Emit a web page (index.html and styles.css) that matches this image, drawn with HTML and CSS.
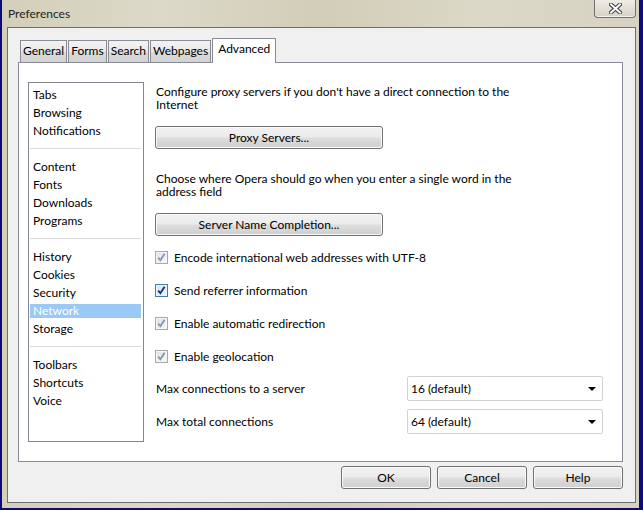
FILE: index.html
```html
<!DOCTYPE html>
<html lang="en">

<head>
    <meta charset="UTF-8" />
    <title>Preferences</title>
    <link rel="stylesheet" href="styles.css">
</head>

<body>
    <div class="window">
        <div class="titlebar">
            <span class="title">Preferences</span>
            <div class="close">
                <svg width="13" height="11" viewBox="0 0 13 11">
                    <path d="M2 1.5 L11 9.5 M11 1.5 L2 9.5" stroke="#3c3c3c" stroke-width="4" stroke-linecap="square" fill="none" />
                    <path d="M2 1.5 L11 9.5 M11 1.5 L2 9.5" stroke="#ffffff" stroke-width="2" stroke-linecap="square" fill="none" />
                </svg>
            </div>
        </div>

        <div class="client">
            <div class="tabs">
                <div class="tab">General</div>
                <div class="tab">Forms</div>
                <div class="tab">Search</div>
                <div class="tab">Webpages</div>
                <div class="tab selected">Advanced</div>
            </div>

            <div class="panel">
                <ul class="categories">
                    <li>Tabs</li>
                    <li>Browsing</li>
                    <li>Notifications</li>
                    <li class="sep"></li>
                    <li>Content</li>
                    <li>Fonts</li>
                    <li>Downloads</li>
                    <li>Programs</li>
                    <li class="sep"></li>
                    <li>History</li>
                    <li>Cookies</li>
                    <li>Security</li>
                    <li class="active">Network</li>
                    <li>Storage</li>
                    <li class="sep"></li>
                    <li>Toolbars</li>
                    <li>Shortcuts</li>
                    <li>Voice</li>
                </ul>

                <div class="settings">
                    <p class="note">Configure proxy servers if you don't have a direct connection to the Internet</p>
                    <button class="btn wide">Proxy Servers...</button>

                    <p class="note second">Choose where Opera should go when you enter a single word in the address field</p>
                    <button class="btn wide">Server Name Completion...</button>

                    <div class="checks">
                        <label class="check-row">
                            <span class="box dim"><svg width="11" height="11" viewBox="0 0 11 11"><path d="M2.2 5.6 L4.4 8.2 L8.6 1.8" /></svg></span>
                            Encode international web addresses with UTF-8
                        </label>
                        <label class="check-row">
                            <span class="box focus"><svg width="11" height="11" viewBox="0 0 11 11"><path d="M2.2 5.6 L4.4 8.2 L8.6 1.8" /></svg></span>
                            Send referrer information
                        </label>
                        <label class="check-row">
                            <span class="box dim"><svg width="11" height="11" viewBox="0 0 11 11"><path d="M2.2 5.6 L4.4 8.2 L8.6 1.8" /></svg></span>
                            Enable automatic redirection
                        </label>
                        <label class="check-row">
                            <span class="box dim"><svg width="11" height="11" viewBox="0 0 11 11"><path d="M2.2 5.6 L4.4 8.2 L8.6 1.8" /></svg></span>
                            Enable geolocation
                        </label>
                    </div>

                    <div class="field">
                        <span>Max connections to a server</span>
                        <div class="select">16 (default)<span class="arrow"></span></div>
                    </div>
                    <div class="field">
                        <span>Max total connections</span>
                        <div class="select">64 (default)<span class="arrow"></span></div>
                    </div>
                </div>
            </div>

            <div class="actions">
                <button class="btn">OK</button>
                <button class="btn">Cancel</button>
                <button class="btn">Help</button>
            </div>
        </div>
    </div>
</body>

</html>
```

FILE: styles.css
```css
:root {
    --navy: #0b0b7a;
    --frame: #d7d4c3;
    --face: #f0f0f0;
    --tab-border: #898c95;
    --text: #000000;
}

/* Base */
body {
    margin: 0;
    background: var(--navy);
    font-family: "Lato", "Liberation Sans", sans-serif;
    font-size: 12px;
    color: var(--text);
}

.window {
    width: 637px;
    height: 508px;
    margin-left: 2px;
    padding: 0 3px 5px 5px;
    box-sizing: border-box;
    background: linear-gradient(90deg, #d3cfba 0%, #dcd9c9 25%, #d2cdb8 50%, #dbd8c7 75%, #d6d3c2 100%);
    display: flex;
    flex-direction: column;
}

.titlebar {
    height: 27px;
    display: flex;
    justify-content: space-between;
    align-items: center;
    flex-shrink: 0;
}

.title {
    padding-left: 1px;
    padding-bottom: 1px;
    color: #222;
}

.close {
    align-self: flex-start;
    width: 42px;
    height: 18px;
    box-sizing: border-box;
    border: 1px solid #707070;
    border-top: none;
    border-radius: 0 0 4px 4px;
    background: linear-gradient(#eeece4, #d6d3c6);
    box-shadow: inset 0 -1px 0 #f6f5f0;
    display: flex;
    align-items: center;
    justify-content: center;
}

.client {
    flex: 1;
    border: 1px solid #6e6e6e;
    background: var(--face);
    padding: 10px 12px 0 10px;
}

/* Tabs */
.tabs {
    display: flex;
    align-items: flex-end;
    padding-left: 2px;
    height: 24px;
}

.tab {
    height: 22px;
    box-sizing: border-box;
    padding: 2px 2px 0;
    margin-right: 1px;
    border: 1px solid var(--tab-border);
    border-bottom: none;
    background: linear-gradient(#f3f3f3, #e8e8e8 50%, #dadada 51%, #d3d3d3);
}

.tab.selected {
    height: 25px;
    margin-right: 0;
    margin-bottom: -1px;
    padding: 2px 5px 0;
    background: #ffffff;
    position: relative;
    z-index: 1;
}

.panel {
    height: 400px;
    box-sizing: border-box;
    border: 1px solid var(--tab-border);
    background: #ffffff;
    padding: 19px 0 0 9px;
    display: flex;
    gap: 11px;
}

/* Category list */
.categories {
    list-style: none;
    margin: 0;
    width: 116px;
    height: 360px;
    box-sizing: border-box;
    padding: 5px 2px 0 1px;
    border: 1px solid #828790;
}

.categories li {
    height: 14px;
    line-height: 13px;
    margin-bottom: 4px;
    padding-left: 3px;
}

/* sibling margins collapse, so the 10px top margin swallows the 4px above */
.categories li.sep {
    height: 1px;
    margin: 10px 0 11px;
    padding: 0;
    background: #dadada;
}

.categories li.active {
    background: #99c9f4;
    color: #ffffff;
}

/* Settings column */
.settings {
    width: 448px;
    padding-top: 3px;
}

.note {
    margin: 0 0 15px;
    padding-left: 1px;
    max-width: 372px;
    line-height: 13px;
}

.note.second {
    margin-top: 23px;
}

.btn {
    font: inherit;
    color: var(--text);
    height: 23px;
    width: 90px;
    border: 1px solid #707070;
    border-radius: 3px;
    background: linear-gradient(#f2f2f2, #ebebeb 48%, #dddddd 52%, #cfcfcf);
    box-shadow: inset 0 0 0 1px #fbfbfb;
    padding: 0;
    display: block;
}

.btn.wide {
    width: 228px;
}

.checks {
    margin-top: 15px;
    display: flex;
    flex-direction: column;
    gap: 20px;
}

.check-row {
    display: flex;
    align-items: center;
    height: 13px;
    gap: 6px;
}

.box {
    width: 13px;
    height: 13px;
    box-sizing: border-box;
    border: 1px solid #a8a8a8;
    background: linear-gradient(135deg, #dedede, #fbfbfb);
    box-shadow: inset 0 0 0 1px #f6f6f6;
    display: flex;
    align-items: center;
    justify-content: center;
}

.box svg path {
    fill: none;
    stroke: #8796b6;
    stroke-width: 1.9;
}

.box.focus {
    border-color: #3c7fb1;
    background: linear-gradient(135deg, #cfe4f4, #f4f9fd);
    box-shadow: inset 0 0 0 1px #e9f3fb;
}

.box.focus svg path {
    stroke: #1d2f82;
}

.field {
    display: flex;
    justify-content: space-between;
    align-items: center;
    padding-left: 1px;
    margin-top: 8px;
}

.checks + .field {
    margin-top: 13px;
}

.select {
    width: 196px;
    height: 25px;
    box-sizing: border-box;
    border: 1px solid #d2d2d2;
    border-radius: 2px;
    background: #ffffff;
    padding: 0 6px 0 3px;
    display: flex;
    align-items: center;
    justify-content: space-between;
}

.arrow {
    width: 0;
    height: 0;
    border-left: 4px solid transparent;
    border-right: 4px solid transparent;
    border-top: 4px solid #000000;
}

.actions {
    display: flex;
    justify-content: flex-end;
    gap: 6px;
    margin-top: 4px;
}
```
